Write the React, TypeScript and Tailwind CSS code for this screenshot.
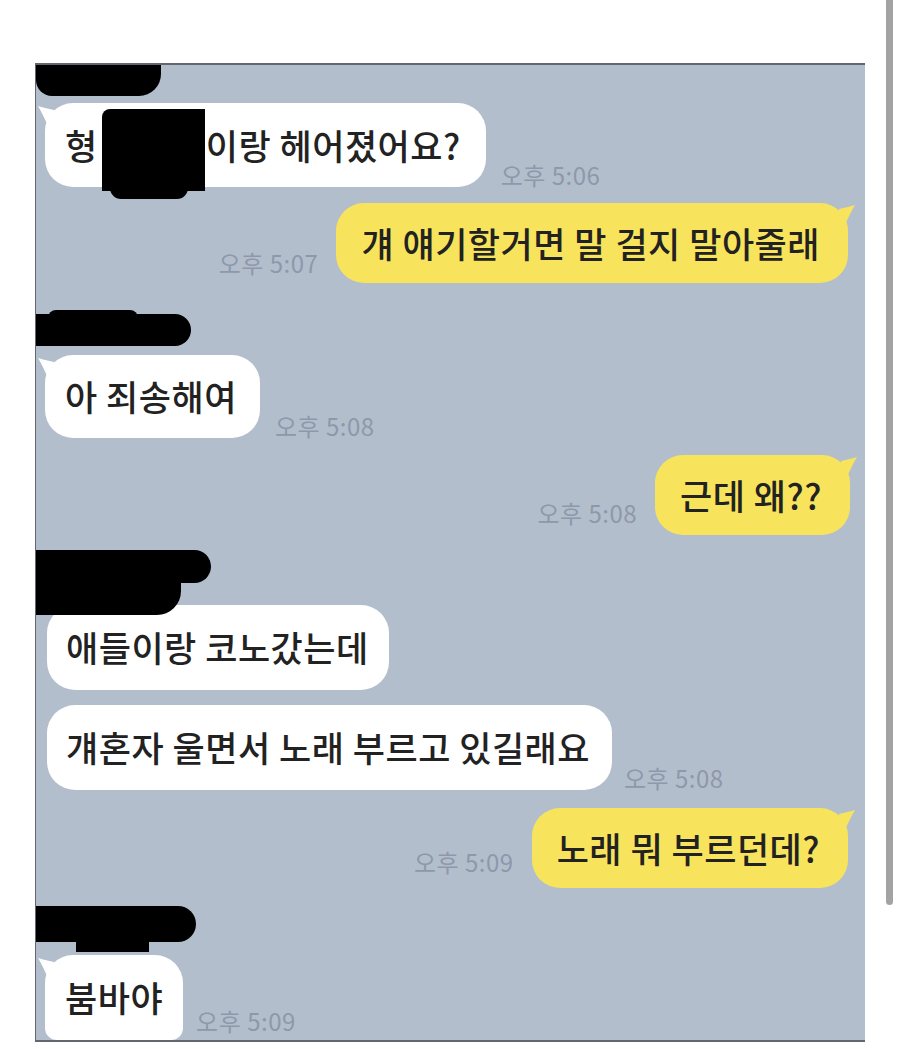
import React from "react";

const FONT = { fontFamily: '"Noto Sans CJK KR", "Noto Sans", sans-serif' };

function LeftTail() {
  return (
    <svg className="absolute left-[-7px] top-[3px]" width="16" height="22" viewBox="0 0 16 22">
      <path d="M16 4 C10 3 4 1 0 0 C3 5 7 13 11 22 L16 22 Z" fill="#ffffff" />
    </svg>
  );
}

function RightTail() {
  return (
    <svg className="absolute right-[-7px] top-[2px]" width="16" height="22" viewBox="0 0 16 22">
      <path d="M0 4 C6 3 12 1 16 0 C13 5 9 13 5 22 L0 22 Z" fill="#f8e45c" />
    </svg>
  );
}

function Time({ children, className }: { children: React.ReactNode; className: string }) {
  return (
    <span className={"text-[24px] font-normal leading-none tracking-[0.5px] text-[#8e98aa] whitespace-nowrap " + className}>
      {children}
    </span>
  );
}

export default function App() {
  return (
    <div className="relative w-[900px] h-[1049px] bg-white overflow-hidden" style={FONT}>
      {/* scrollbar */}
      <div className="absolute left-[886px] top-0 w-[7px] h-[905px] rounded-b-full bg-[#a3a3a3]" />

      <div className="ml-[35px] mt-[63px] w-[830px] h-[979px] border-t-2 border-l border-b-2 border-[#62676f] bg-[#b3becd] overflow-hidden flex flex-col text-[35px] tracking-[0.5px] font-medium text-[#222222]">
        {/* name 1 */}
        <div className="relative h-[38px] shrink-0">
          <div className="absolute left-0 top-0 w-[125px] h-[31px] bg-black rounded-br-[22px] rounded-bl-[16px]" />
        </div>

        {/* row 1 */}
        <div className="flex items-end gap-[15px] pl-[9px] shrink-0">
          <div className="relative h-[84px] flex items-center bg-white rounded-[28px] pl-[20px] pr-[25px]">
            <LeftTail />
            <span>형</span>
            <span className="inline-block w-[108px]" />
            <span>이랑 헤어졌어요?</span>
            <div className="absolute left-[57px] top-[6px] w-[103px] h-[82px] bg-black rounded-tl-[8px]" />
            <div className="absolute left-[65px] top-[74px] w-[78px] h-[22px] bg-black rounded-full" />
          </div>
          <Time className="mb-0">오후 5:06</Time>
        </div>

        {/* row 2 */}
        <div className="flex items-end justify-end gap-[18px] pr-[17px] mt-[16px] shrink-0">
          <Time className="mb-[8px]">오후 5:07</Time>
          <div className="relative h-[80px] flex items-center bg-[#f8e45c] rounded-[28px] pl-[25px] pr-[28px]">
            <RightTail />
            <span>걔 얘기할거면 말 걸지 말아줄래</span>
          </div>
        </div>

        {/* name 2 */}
        <div className="relative h-[47px] mt-[25px] shrink-0">
          <div className="absolute left-0 top-[6px] w-[155px] h-[32px] bg-black rounded-r-full rounded-l-[14px]" />
          <div className="absolute left-[12px] top-[2px] w-[90px] h-[16px] bg-black rounded-full" />
        </div>

        {/* row 3 */}
        <div className="flex items-end gap-[15px] pl-[9px] shrink-0">
          <div className="relative h-[83px] flex items-center bg-white rounded-[28px] pl-[20px] pr-[23px]">
            <LeftTail />
            <span>아 죄송해여</span>
          </div>
          <Time className="mb-0">오후 5:08</Time>
        </div>

        {/* row 4 */}
        <div className="flex items-end justify-end gap-[18px] pr-[15px] mt-[17px] shrink-0">
          <Time className="mb-[10px]">오후 5:08</Time>
          <div className="relative h-[80px] flex items-center bg-[#f8e45c] rounded-[28px] pl-[25px] pr-[28px]">
            <RightTail />
            <span>근데 왜??</span>
          </div>
        </div>

        {/* name 3 */}
        <div className="relative h-[55px] mt-[15px] shrink-0 z-10">
          <div className="absolute left-0 top-0 w-[175px] h-[33px] bg-black rounded-r-full" />
          <div className="absolute left-0 top-[22px] w-[145px] h-[43px] bg-black rounded-br-[24px] rounded-tr-[10px]" />
        </div>

        {/* row 5 */}
        <div className="flex items-end pl-[11px] shrink-0">
          <div className="relative h-[85px] flex items-center bg-white rounded-[28px] pl-[19px] pr-[20px]">
            <span>애들이랑 코노갔는데</span>
          </div>
        </div>

        {/* row 6 */}
        <div className="flex items-end gap-[12px] pl-[11px] mt-[15px] shrink-0">
          <div className="relative h-[85px] flex items-center bg-white rounded-[28px] pl-[19px] pr-[22px]">
            <span>걔혼자 울면서 노래 부르고 있길래요</span>
          </div>
          <Time className="mb-0">오후 5:08</Time>
        </div>

        {/* row 7 */}
        <div className="flex items-end justify-end gap-[18px] pr-[17px] mt-[18px] shrink-0">
          <Time className="mb-[14px]">오후 5:09</Time>
          <div className="relative h-[80px] flex items-center bg-[#f8e45c] rounded-[28px] pl-[25px] pr-[28px]">
            <RightTail />
            <span>노래 뭐 부르던데?</span>
          </div>
        </div>

        {/* name 4 */}
        <div className="relative h-[57px] mt-[10px] shrink-0 z-10">
          <div className="absolute left-0 top-[8px] w-[160px] h-[36px] bg-black rounded-r-full rounded-tl-[18px]" />
          <div className="absolute left-[40px] top-[32px] w-[73px] h-[22px] bg-black" />
        </div>

        {/* row 8 */}
        <div className="flex items-start gap-[13px] pl-[9px] shrink-0">
          <div className="relative h-[85px] flex items-center bg-white rounded-t-[28px] rounded-b-[12px] pl-[20px] pr-[20px]">
            <LeftTail />
            <span>붐바야</span>
          </div>
          <Time className="mt-[54px]">오후 5:09</Time>
        </div>
      </div>
    </div>
  );
}
